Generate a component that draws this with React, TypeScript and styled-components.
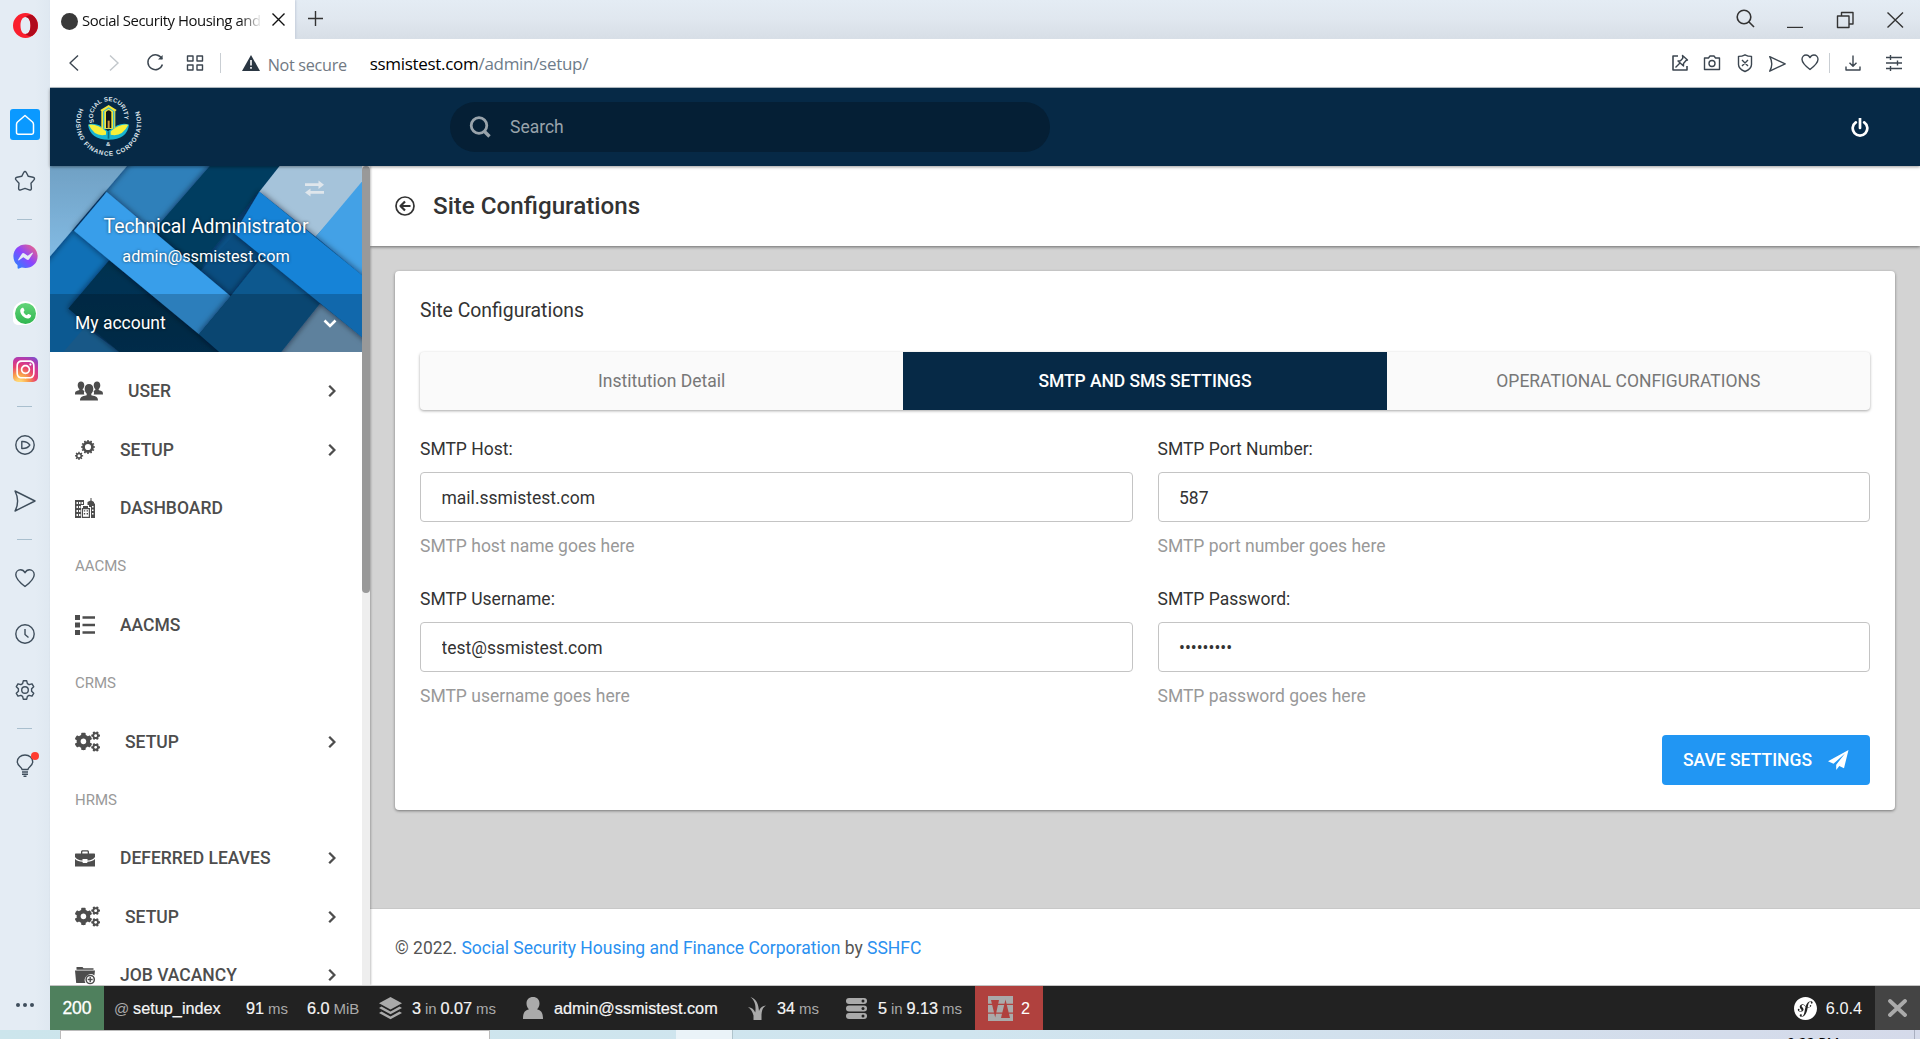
import React from 'react';
import styled, { createGlobalStyle } from 'styled-components';
import { FaCogs, FaFacebookMessenger, FaInstagram } from 'react-icons/fa';
import { SiSymfony } from 'react-icons/si';

const NAVY = '#062946';

const GlobalStyle = createGlobalStyle`
  * { box-sizing: border-box; }
  body { margin: 0; overflow: hidden; font-family: Roboto, "Liberation Sans", sans-serif; font-size: 17.5px; color: #333; }
`;

const Desktop = styled.div`
  width: 1920px;
  height: 1039px;
  display: flex;
  flex-direction: column;
  overflow: hidden;
`;
const BrowserWindow = styled.div`
  height: 1030px;
  display: flex;
  flex-shrink: 0;
`;
const Column = styled.div`
  flex: 1;
  min-width: 0;
  display: flex;
  flex-direction: column;
`;

/* ---------- opera side rail ---------- */
const Rail = styled.nav`
  width: 50px;
  padding: 10.5px 1px 10px 0;
  display: flex;
  flex-direction: column;
  align-items: center;
  background: linear-gradient(90deg, #e4ecf4 70%, #dfe8f1);
`;
const Slot = styled.div<{ $gap?: number }>`
  position: relative;
  width: 30px;
  height: 30px;
  flex-shrink: 0;
  margin-top: ${(p) => p.$gap ?? 0}px;
  display: flex;
  align-items: center;
  justify-content: center;
  color: #3f4e5c;
`;
const AppSlot = styled(Slot)`
  margin-left: 1px;
`;
const HomeTile = styled(Slot)`
  margin-left: 1px;
  height: 31px;
  background: #0a99ff;
  border-radius: 3px;
  color: #fff;
`;
const Dash = styled.div`
  width: 15px;
  height: 1px;
  background: #a9bfce;
`;
const Messenger = styled(FaFacebookMessenger)`
  width: 25px;
  height: 25px;
`;
const WhatsTile = styled.div`
  width: 24px;
  height: 24px;
  border-radius: 50% 50% 50% 20%;
  background: #fff;
  display: flex;
  align-items: center;
  justify-content: center;
`;
const WhatsDisc = styled.div`
  width: 21px;
  height: 21px;
  border-radius: 50%;
  background: linear-gradient(#63d579, #2fb650);
  color: #fff;
  display: flex;
  align-items: center;
  justify-content: center;
`;
const InstaTile = styled.div`
  width: 25px;
  height: 25px;
  border-radius: 5px;
  background: radial-gradient(circle at 25% 105%, #ffd776 8%, #f9a04b 28%, #e8426f 52%, #c736a0 72%, #6a55d8 100%);
  color: #fff;
  display: flex;
  align-items: center;
  justify-content: center;
`;
const Alert = styled.i`
  position: absolute;
  right: 1px;
  top: 1px;
  width: 8px;
  height: 8px;
  border-radius: 50%;
  background: #ff3b30;
`;
const DotsSlot = styled(Slot)`
  margin-top: auto;
`;

/* ---------- browser chrome ---------- */
const uiFont = '"Open Sans", "Noto Sans", sans-serif';
const TabStrip = styled.div`
  height: 39px;
  display: flex;
  align-items: center;
  background: linear-gradient(#e4ecf4, #e0e7ef 50%, #d7dee6);
`;
const Tab = styled.div`
  width: 245px;
  height: 39px;
  padding: 0 10px 0 11px;
  display: flex;
  align-items: center;
  background: #fff;
  font: 14.9px ${uiFont};
  letter-spacing: -0.45px;
  color: #111;
  box-shadow: 1px 0 2px #c5cedb;
`;
const Favicon = styled.div`
  width: 17px;
  height: 17px;
  margin: 3px 4px 0 0;
  border-radius: 50%;
  background: #393939;
  flex-shrink: 0;
`;
const TabTitle = styled.div`
  width: 180px;
  overflow: hidden;
  white-space: nowrap;
  margin-right: 10px;
  flex-shrink: 0;
  mask-image: linear-gradient(90deg, #000 88%, transparent);
`;
const NewTab = styled.div`
  margin-left: 13px;
  display: flex;
  margin-bottom: 2px;
`;
const WindowButtons = styled.div`
  margin-left: auto;
  margin-right: 14px;
  display: flex;
  align-items: center;
  gap: 28px;
  height: 37px;
`;
const FindTabs = styled.div`
  margin: -2px 1px 0 -1px;
`;
const Toolbar = styled.div`
  height: 49px;
  display: flex;
  align-items: center;
  background: #fff;
  border-bottom: 1px solid #b8c2ca;
  padding-left: 14px;
  padding-right: 16px;
  color: #3c4650;
`;
const NavGroup = styled.div`
  display: flex;
  gap: 20.4px;
  align-items: center;
`;
const VLine = styled.div<{ $l: number; $r: number }>`
  width: 1px;
  height: 20px;
  background: #c9ced3;
  margin: 0 ${(p) => p.$r}px 0 ${(p) => p.$l}px;
`;
const NotSecure = styled.span`
  font: 16.2px ${uiFont};
  letter-spacing: -0.3px;
  color: #717983;
  width: 110px;
  padding: 3px 0 0 8px;
  white-space: nowrap;
`;
const Url = styled.span`
  font: 17px ${uiFont};
  letter-spacing: -0.3px;
  color: #000;
  white-space: nowrap;
  span { color: #6d7c8a; }
`;
const ToolIcons = styled.div`
  margin-left: auto;
  display: flex;
  align-items: center;
  gap: 12.5px;
`;

/* ---------- site header ---------- */
const SiteHeader = styled.header`
  height: 78px;
  flex-shrink: 0;
  display: flex;
  align-items: center;
  background: ${NAVY};
  position: relative;
  z-index: 2;
  box-shadow: 0 1px 3px rgba(0, 0, 0, 0.4);
`;
const LogoBox = styled.div`
  width: 400px;
  padding-left: 10px;
  height: 78px;
`;
const SearchPill = styled.div`
  width: 600px;
  height: 50px;
  border-radius: 25px;
  background: #051f35;
  color: #99a3ab;
  display: flex;
  align-items: center;
  padding-left: 19px;
  gap: 19px;
`;
const PowerSlot = styled.div`
  margin-left: auto;
  margin-right: 51px;
  color: #fff;
`;

/* ---------- sidebar ---------- */
const Body = styled.div`
  flex: 1;
  min-height: 0;
  display: flex;
`;
const Sidebar = styled.aside`
  width: 320px;
  display: flex;
  background: #fff;
  overflow: hidden;
  box-shadow: 1px 0 2px rgba(0, 0, 0, 0.25);
  position: relative;
  z-index: 1;
`;
const SideContent = styled.div`
  width: 312px;
`;
const Track = styled.div`
  width: 8px;
  background: #eee;
`;
const Thumb = styled.div`
  height: 427px;
  border-radius: 4px;
  background: #999;
`;
const Profile = styled.div`
  position: relative;
  height: 186px;
  color: #fff;
  text-shadow: 0 0 3px rgba(0, 0, 0, 0.6);
`;
const Backdrop = styled.svg`
  position: absolute;
  inset: 0;
`;
const ProfileText = styled.div`
  position: relative;
  height: 128px;
  text-align: center;
  padding-top: 47px;
`;
const SwapCorner = styled.div`
  position: absolute;
  right: 38px;
  top: 14px;
`;
const Name = styled.div`
  font-size: 19.4px;
  line-height: 28px;
`;
const Email = styled.div`
  font-size: 16.3px;
  line-height: 24px;
  margin-top: 4px;
`;
const Account = styled.div`
  position: relative;
  height: 58px;
  background: rgba(0, 0, 0, 0.2);
  display: flex;
  align-items: center;
  justify-content: space-between;
  padding: 0 25px;
`;
const Menu = styled.div`
  padding-top: 10px;
  color: #4d4d4d;
`;
const Group = styled.div`
  height: 58.4px;
  line-height: 58px;
  padding-left: 25px;
  font-size: 15px;
  color: #999;
`;
const Item = styled.div`
  height: 58.4px;
  display: flex;
  align-items: center;
  padding: 0 26px 0 25px;
  font-weight: 500;
`;
const ItemIcon = styled.span`
  display: flex;
  margin-right: 25px;
`;
const Chevron = styled.svg`
  margin-left: auto;
`;

/* ---------- main ---------- */
const Main = styled.main`
  flex: 1;
  min-width: 0;
  display: flex;
  flex-direction: column;
  background: #d3d3d3;
`;
const PageHeader = styled.div`
  height: 80px;
  background: #fff;
  display: flex;
  align-items: center;
  gap: 18px;
  padding: 0 0 0 25px;
  box-shadow: 0 1px 3px rgba(0, 0, 0, 0.5);
  flex-shrink: 0;
`;
const PageTitle = styled.h1`
  margin: 0;
  font-size: 24.2px;
  font-weight: 500;
`;
const Card = styled.section`
  margin: 25px 25px 0;
  height: 539px;
  padding: 0 25px;
  background: #fff;
  border-radius: 4px;
  box-shadow: 0 1px 3px rgba(0, 0, 0, 0.45);
  flex-shrink: 0;
`;
const CardTitle = styled.h2`
  margin: 0;
  height: 81px;
  line-height: 80px;
  font-size: 19.4px;
  font-weight: 400;
`;
const Tabs = styled.div`
  height: 58px;
  display: grid;
  grid-template-columns: repeat(3, 1fr);
  border-radius: 4px;
  background: #fafafa;
  box-shadow: 0 1px 3px rgba(0, 0, 0, 0.35);
`;
const TabItem = styled.div<{ $active?: boolean }>`
  display: flex;
  align-items: center;
  justify-content: center;
  background: ${(p) => (p.$active ? NAVY : 'transparent')};
  color: ${(p) => (p.$active ? '#fff' : '#777')};
  font-weight: ${(p) => (p.$active ? 500 : 400)};
  letter-spacing: ${(p) => (p.$active ? '-0.07px' : '0')};
`;
const Form = styled.div`
  display: grid;
  grid-template-columns: 1fr 1fr;
  column-gap: 25px;
  padding-top: 25px;
`;
const Field = styled.div`
  height: 150px;
`;
const Label = styled.label`
  display: block;
  height: 37px;
  line-height: 29px;
`;
const Input = styled.input`
  display: block;
  width: 100%;
  height: 50px;
  border: 1px solid #c4c4c4;
  border-radius: 4px;
  padding: 2px 20px 0 20.5px;
  font: inherit;
  color: #333;
  outline: none;
`;
const Help = styled.div`
  line-height: 27px;
  margin-top: 11px;
  color: #999;
`;
const SaveButton = styled.button`
  display: flex;
  align-items: center;
  gap: 16px;
  width: 208px;
  height: 50px;
  margin-left: auto;
  padding: 0 0 0 21px;
  border: 0;
  border-radius: 4px;
  background: #2196f3;
  color: #fff;
  font: 500 17.5px Roboto, sans-serif;
  white-space: nowrap;
`;
const Footer = styled.footer`
  margin-top: auto;
  height: 77px;
  border-top: 1px solid #c8c8c8;
  background: #fff;
  padding: 0 25px;
  line-height: 78px;
  color: #555;
  a { color: #2a90f0; }
`;

/* ---------- debug toolbar ---------- */
const DebugBar = styled.div`
  height: 45px;
  flex-shrink: 0;
  display: flex;
  background: #222;
  border-top: 1px solid #c4c4c4;
  font: 16.25px "Liberation Sans", Arial, sans-serif;
  color: #f5f5f5;
  white-space: nowrap;
  position: relative;
  z-index: 3;
`;
const Block = styled.div<{ $w: number; $pad?: number; $bg?: string }>`
  width: ${(p) => p.$w}px;
  padding-left: ${(p) => p.$pad ?? 0}px;
  background: ${(p) => p.$bg ?? 'transparent'};
  display: flex;
  align-items: center;
  flex-shrink: 0;
  color: ${(p) => (p.$bg ? '#fff' : 'inherit')};
`;
const Status = styled(Block)`
  font-size: 17.5px;
  justify-content: center;
  -webkit-text-stroke: 0.3px #fff;
`;
const Value = styled.span`
  -webkit-text-stroke: 0.2px #f5f5f5;
`;
const Unit = styled.span`
  font-size: 15px;
  word-spacing: -0.3px;
  color: #aaa;
  white-space: pre;
`;
const BlockIcon = styled.svg<{ $gap: number }>`
  margin-right: ${(p) => p.$gap}px;
  flex-shrink: 0;
`;
const Version = styled.div`
  margin-left: auto;
  display: flex;
  align-items: center;
  gap: 9px;
  margin-right: 13px;
`;
const CloseBar = styled.div`
  width: 45px;
  background: #444;
  display: flex;
  align-items: center;
  justify-content: center;
`;

/* ---------- strip of the desktop below the window ---------- */
const Taskbar = styled.div`
  height: 9px;
  display: flex;
  overflow: hidden;
  background: linear-gradient(90deg, #cce5ec, #d0e5ef 50%, #d5daea);
`;
const TaskSearch = styled.div`
  margin-left: 60px;
  width: 430px;
  border: 1px solid #bbb;
  border-bottom: 0;
  background: #fff;
`;
const TaskActive = styled.div`
  margin-left: 186px;
  width: 57px;
  background: #eaf3f8;
  border-right: 1px solid #b0c4cc;
`;
const Clock = styled.div`
  margin-left: auto;
  width: 127px;
  padding-top: 4px;
  font: 14px/17px ${uiFont};
  color: #000;
`;
const TaskEdge = styled.div`
  width: 6px;
  border-left: 1px solid #a9afc0;
`;

/* ---------- drawings ---------- */
const LineSvg = styled.svg`
  display: block;
  fill: none;
  stroke: currentColor;
  stroke-linejoin: round;
`;
type IconProps = { w: number; h?: number; sw?: number; vb?: string; children: React.ReactNode };
const Line = ({ w, h = w, sw = 1.4, vb, children }: IconProps) => (
  <LineSvg width={w} height={h} viewBox={vb ?? `0 0 ${w} ${h}`} strokeWidth={sw}>{children}</LineSvg>
);

const gearPath = (cx: number, cy: number, teeth: number, ro: number, ri: number, hole: number) => {
  const pts: string[] = [];
  const step = (Math.PI * 2) / teeth;
  for (let i = 0; i < teeth; i++) {
    const a = i * step;
    ([[ri, -0.28], [ro, -0.2], [ro, 0.2], [ri, 0.28]] as const).forEach(([r, o]) => {
      pts.push(`${(cx + r * Math.sin(a + o * step)).toFixed(2)},${(cy - r * Math.cos(a + o * step)).toFixed(2)}`);
    });
  }
  return `M${pts.join('L')}Z M${cx - hole},${cy}a${hole},${hole} 0 1 0 ${hole * 2},0a${hole},${hole} 0 1 0 ${-hole * 2},0Z`;
};

const StarIcon = () => (
  <Line w={22} h={22}><path d="M11 1.500c.7 0 1 .5 1.300 1l2 3.800 4.700 1c1.500.3 2 1.500 1 2.600l-3 3.300.4 5.100c.1 1.500-.9 2-2.200 1.500L11 18.400l-4.200 1.400c-1.300.5-2.300 0-2.200-1.500l.4-5.100-3-3.300C1 8.800 1.500 7.600 3 7.300l4.700-1 2-3.800c.3-.5.6-1 1.300-1z" /></Line>
);
const SendIcon = () => (
  <Line w={22}><path d="M1 1l20 10L1 21c3.500-6.700 3.500-13.300 0-20z" /></Line>
);
const HEART = 'M10 18.500C6 15.500.8 11.500.8 6.800.8 3.800 3 1.800 5.500 1.800c2 0 3.600 1.200 4.500 3 .9-1.800 2.500-3 4.500-3 2.500 0 4.700 2 4.700 5 0 4.700-5.200 8.700-9.200 11.700z';
const ChevronIcon = () => (
  <Chevron width="8" height="14" viewBox="0 0 8 14" fill="none" stroke="currentColor" strokeWidth="2.300"><path d="M1.200 1.800L6.400 7l-5.200 5.200" /></Chevron>
);
const UsersIcon = () => (
  <svg width="28" height="20" viewBox="0 0 28 20" fill="currentColor">
    <path d="M6 .5c2 0 3.300 1.500 3.300 3.700 0 1.700-.8 3.100-1.600 3.800v1.100l1.800.9c-.8 1.500-.6 2.700-.1 3.500H0c0-2.700.6-3.300 4.300-4.400V8C3.500 7.300 2.700 5.900 2.700 4.200 2.700 2 4 .5 6 .5z" />
    <path d="M22 .5c-2 0-3.300 1.500-3.300 3.700 0 1.700.8 3.100 1.600 3.800v1.100l-1.800.9c.8 1.500.6 2.700.1 3.500H28c0-2.700-.6-3.300-4.300-4.400V8c.8-.7 1.600-2.100 1.600-3.800C25.300 2 24 .5 22 .5z" />
    <path d="M14 3c2.600 0 4.300 2 4.300 4.800 0 2.200-.9 4-2 4.900v1.500c5.200 1.100 6.700 2 6.700 5.300H5c0-3.300 1.500-4.200 6.700-5.300v-1.500c-1.100-.9-2-2.700-2-4.900C9.700 5 11.400 3 14 3z" />
  </svg>
);
const GearsIcon = () => (
  <svg width="20" height="20" viewBox="0 0 20 20" fill="currentColor" fillRule="evenodd">
    <path d={gearPath(13, 7, 12, 7, 5.8, 3.1)} />
    <path d={gearPath(4, 15.8, 8, 4.2, 3.1, 1.5)} />
  </svg>
);
const CityIcon = () => (
  <svg width="20" height="20" viewBox="0 0 20 20" fill="currentColor" fillRule="evenodd">
    <path d="M0 2h9v5H6v13H0zM1.500 4v2H3V4zm2.500 0v2h1.500V4zm2.500 0v2H8V4zM1.500 8v2H3V8zM4 8v2h1.500V8zM1.500 12v2H3v-2zM4 12v2h1.500v-2zM1.500 16v2H3v-2zM4 16v2h1.500v-2z" />
    <path d="M15.500 0h1v2.500L19 4v1.500h1V20h-4V9h-2V7h-1.500V4L15.500 2.500zM17 8v1.500h1.500V8zm0 3.500V13h1.500v-1.500zm0 3.500v1.500h1.500V15z" />
    <path d="M8 8h5v2h2v10H6.800V10H8zM8 11.200v7.600h5.800v-7.600z" />
    <path d="M8.800 12.200h1.400v1.400H8.800zM11.600 12.200H13v1.400h-1.400zM8.800 15h1.400v1.400H8.800zM11.600 15H13v1.400h-1.400z" />
  </svg>
);
const ListIcon = () => (
  <svg width="20" height="20" viewBox="0 0 20 20" fill="currentColor">
    <path d="M0 0h5v5H0zM0 7.500h5v5H0zM0 15h5v5H0zM7.500 1.200H20v2.500H7.500zM7.500 8.700H20v2.500H7.500zM7.500 16.200H20v2.500H7.500z" />
  </svg>
);
const CaseIcon = () => (
  <svg width="20" height="20" viewBox="0 0 20 20" fill="currentColor">
    <path d="M6 5.500V4c0-1.200.6-1.700 1.700-1.700h4.600C13.400 2.300 14 2.800 14 4v1.500h5c.7 0 1 .3 1 1V9c-1.500 2.300-4 3.300-7.500 3.500V11h-5v1.500C4 12.300 1.500 11.300 0 9V6.500c0-.7.3-1 1-1zm1.300 0h5.400V4c0-.3-.2-.5-.5-.5H7.800c-.3 0-.5.2-.5.5z" fillRule="evenodd" />
    <path d="M0 11c2 1.800 4.300 2.500 7.500 2.700 0 1 .5 1.300 1.200 1.300h2.600c.7 0 1.200-.3 1.200-1.300 3.200-.2 5.500-.9 7.500-2.700v7.500H0z" />
  </svg>
);
const FolderIcon = () => (
  <svg width="20" height="20" viewBox="0 0 20 20" fill="currentColor">
    <path d="M1.500 2h6l1 1.300h10v1.400H1.500zM0 5.500h20l-.6 5a6 6 0 0 0-9 7.500H1.200z" />
    <circle cx="15.200" cy="14.500" r="4.100" fill="#fff" stroke="currentColor" strokeWidth="1.500" />
    <path d="M14.500 12h1.400v1.800h1.800v1.400h-1.800V17h-1.400v-1.800h-1.800v-1.400h1.800z" />
  </svg>
);
const PlaneIcon = () => (
  <svg width="21" height="20" viewBox="0 0 21 20" fill="currentColor">
    <path d="M20.500 0L0 11.200l5.500 2.600L17 3.500 8.200 14.700V20l3.100-3.900 4.700 2.100z" />
  </svg>
);

const ProfileArt = () => (
  <Backdrop width="312" height="186" viewBox="150 18 936 557" preserveAspectRatio="none">
    <defs>
      <filter id="shade" x="-20%" y="-20%" width="140%" height="140%"><feDropShadow dx="0" dy="0" stdDeviation="10" floodColor="#00101f" floodOpacity="0.65" /></filter>
      <linearGradient id="sky" x1="0" y1="0" x2="0" y2="1"><stop offset="0" stopColor="#6f9fc2" /><stop offset="1" stopColor="#84bde6" /></linearGradient>
      <linearGradient id="deep" x1="0" y1="0" x2="0" y2="1"><stop offset="0" stopColor="#06304f" /><stop offset="1" stopColor="#06375c" /></linearGradient>
    </defs>
    <rect x="150" y="18" width="936" height="557" fill="#0b5288" />
    <polygon points="360,0 650,0 450,230 310,110" fill="#2f80ba" />
    <g filter="url(#shade)"><polygon points="645,0 853,0 620,290 600,340 440,235" fill="#063c61" /></g>
    <polygon points="705,220 785,290 690,408 600,335" fill="#0a4d80" />
    <polygon points="130,220 225,212 328,300 170,490 130,530" fill="#1070b6" />
    <polygon points="130,530 205,445 290,510 190,590 130,590" fill="#1070b6" />
    <polygon points="190,575 255,500 360,575" fill="#1e6fa9" />
    <g filter="url(#shade)"><polygon points="328,300 205,445 375,590 680,590" fill="url(#deep)" /></g>
    <g filter="url(#shade)"><polygon points="130,0 396,0 130,312" fill="url(#sky)" /></g>
    <g filter="url(#shade)"><polygon points="320,96 692,408 597,522 222,212" fill="#379eea" /></g>
    <polygon points="820,520 960,430 1100,541 1100,600 800,600" fill="#76a2c5" />
    <g filter="url(#shade)"><polygon points="790,285 972,415 830,592 675,590 597,522 692,408" fill="#0b588e" /></g>
    <polygon points="853,0 1110,0 1110,50 947,230 778,95" fill="#a5c3da" />
    <polygon points="1110,36 947,230 1110,365" fill="#43a1e6" />
    <g filter="url(#shade)"><polygon points="778,95 1110,365 1110,550 703,220" fill="#1683d7" /></g>
  </Backdrop>
);

const SealLogo = () => (
  <svg width="100" height="76" viewBox="0 0 300 228">
    <defs>
      <path id="inner" d="M102 103A47 47 0 1 1 190 103" />
      <path id="outer" d="M59 60A98 98 0 1 0 233 60" />
    </defs>
    <g fill="#dfe6ec" fontFamily="Liberation Sans, sans-serif" fontWeight="700">
      <text fontSize="18" textLength="172" lengthAdjust="spacing"><textPath href="#inner">SOCIAL SECURITY</textPath></text>
      <text fontSize="19" textLength="392" lengthAdjust="spacing"><textPath href="#outer">HOUSING FINANCE CORPORATION</textPath></text>
      <text x="138" y="173" fontSize="18">&amp;</text>
    </g>
    <path d="M84 110Q100 104 118 112L144 130 172 112Q190 104 207 110Q202 154 146 155Q90 154 84 110z" fill="#19b4d2" />
    <path d="M86 110Q112 106 138 130L138 140Q104 148 86 110z M205 110Q178 106 152 130L152 140Q186 148 205 110z" fill="#f7f03a" />
    <path d="M121 66L146 51 170 66 166 70V122H124V70z" fill="#f4e63a" />
    <path d="M129 70L146 58 163 70V122H129z" fill="#38b7cc" />
    <path d="M133 70L146 62 159 70V122H133z" fill="#f4e63a" />
    <path d="M138 72Q146 62 154 72V120H138z" fill="#101418" />
    <path d="M143 98h6v22h-6z" fill="#d6a03a" />
    <path d="M143 130h5v22h-5z" fill="#0c7087" />
  </svg>
);

const menu = [
  { label: 'USER', icon: <UsersIcon />, more: true },
  { label: 'SETUP', icon: <GearsIcon />, more: true },
  { label: 'DASHBOARD', icon: <CityIcon /> },
  { group: 'AACMS' },
  { label: 'AACMS', icon: <ListIcon /> },
  { group: 'CRMS' },
  { label: 'SETUP', icon: <FaCogs size={25} />, more: true },
  { group: 'HRMS' },
  { label: 'DEFERRED LEAVES', icon: <CaseIcon />, more: true },
  { label: 'SETUP', icon: <FaCogs size={25} />, more: true },
  { label: 'JOB VACANCY', icon: <FolderIcon />, more: true },
];

const fields = [
  { label: 'SMTP Host:', value: 'mail.ssmistest.com', help: 'SMTP host name goes here' },
  { label: 'SMTP Port Number:', value: '587', help: 'SMTP port number goes here' },
  { label: 'SMTP Username:', value: 'test@ssmistest.com', help: 'SMTP username goes here' },
  { label: 'SMTP Password:', value: '123456789', help: 'SMTP password goes here', type: 'password' },
];

const SideRail = () => (
  <Rail>
    <AppSlot>
      <svg width="25" height="25" viewBox="0 0 25 25">
        <path fillRule="evenodd" fill="#fa1e2d" d="M12.500 0a12.500 12.500 0 1 0 0 25 12.500 12.500 0 0 0 0-25zm0 4c3 0 5 3.500 5 8.500s-2 8.500-5 8.500-5-3.500-5-8.500 2-8.500 5-8.500z" />
        <path fill="#b00a1c" d="M12.500 4c2-1.800 4-2.400 6.500-1.900 7.500 4.500 8 16 0 20.800-2.500.5-4.500-.1-6.500-1.900 3 0 5-3.500 5-8.500s-2-8.500-5-8.500z" />
      </svg>
    </AppSlot>
    <HomeTile $gap={68.5}><Line w={20} h={22} sw={1.5}><path d="M10 1.500l7.500 6.500c.8.800 1 1.500 1 2.500v8c0 1-.6 1.700-1.700 1.700H3.200c-1.100 0-1.700-.7-1.700-1.700v-8c0-1 .2-1.700 1-2.500z" /></Line></HomeTile>
    <Slot $gap={26}><StarIcon /></Slot>
    <Slot $gap={8}><Dash /></Slot>
    <AppSlot $gap={7}>
      <Messenger fill="url(#msg)" />
      <svg width="0" height="0"><defs><linearGradient id="msg" x1="0" y1="1" x2="1" y2="0"><stop offset="0" stopColor="#1a8cff" /><stop offset=".5" stopColor="#8a45ff" /><stop offset="1" stopColor="#ff6a70" /></linearGradient></defs></svg>
    </AppSlot>
    <AppSlot $gap={27}><WhatsTile><WhatsDisc><svg width="13" height="13" viewBox="0 0 13 13" fill="currentColor"><path d="M3.300.8c.4-.3.900-.2 1.100.2l1 2.100c.2.400 0 .7-.2 1l-.7.8c.700 1.500 1.800 2.600 3.400 3.300l.9-1c.2-.3.500-.3.800-.2l2.200 1.100c.4.200.4.500.3.900-.5 1.700-1.700 2.700-3.300 2.500C4.900 10.900 1.400 7.400 1.200 3.900 1.200 2.500 2.200 1.300 3.300.8z" /></svg></WhatsDisc></WhatsTile></AppSlot>
    <AppSlot $gap={26}><InstaTile><FaInstagram size={21} /></InstaTile></AppSlot>
    <Slot $gap={7.5}><Dash /></Slot>
    <Slot $gap={8}><Line w={20}><circle cx="10" cy="10" r="9.200" /><path d="M6.800 6.500c4-.2 6.500 1.200 8 3.500-1.500 2.300-4 3.700-8 3.500z" /></Line></Slot>
    <Slot $gap={26.5}><SendIcon /></Slot>
    <Slot $gap={8}><Dash /></Slot>
    <Slot $gap={8.5}><Line w={20}><path d={HEART} /></Line></Slot>
    <Slot $gap={26}><Line w={20}><circle cx="10" cy="10" r="9.200" /><path d="M10 5v5.500l3.500 3" /></Line></Slot>
    <Slot $gap={26}><Line w={20}><path d="M8.300.8h3.400l.7 2.900 1.700 1 2.900-.9 1.700 2.900-2.100 2.100v2.400l2.100 2.100-1.700 2.900-2.900-.9-1.700 1-.7 2.900H8.300l-.7-2.900-1.700-1-2.900.9-1.700-2.900 2.100-2.100V8.800L1.300 6.700 3 3.800l2.900.9 1.700-1z" /><circle cx="10" cy="10" r="3.300" /></Line></Slot>
    <Slot $gap={8.5}><Dash /></Slot>
    <Slot $gap={7.5}>
      <Line w={18} h={23}><path d="M6 15.500C6 13 1.300 12 1.300 7.700 1.300 4 4.500 1 9 1s7.700 3 7.700 6.700C16.700 12 12 13 12 15.500zM6 18h6M6 20.200h6M7.500 22.300h3" /></Line>
      <Alert />
    </Slot>
    <DotsSlot><svg width="18" height="4" fill="currentColor"><circle cx="2" cy="2" r="2" /><circle cx="9" cy="2" r="2" /><circle cx="16" cy="2" r="2" /></svg></DotsSlot>
  </Rail>
);

const Chrome = () => (
  <>
    <TabStrip>
      <Tab>
        <Favicon />
        <TabTitle>Social Security Housing and</TabTitle>
        <Line w={13}><path d="M.5.5l12 12M12.500.5l-12 12" /></Line>
      </Tab>
      <NewTab><Line w={15}><path d="M7.500 0v15M0 7.500h15" /></Line></NewTab>
      <WindowButtons>
        <FindTabs><Line w={20} sw={1.6}><circle cx="9" cy="8" r="6.800" /><path d="M13.500 12.500l5.500 5.500" /></Line></FindTabs>
        <Line w={22} h={16}><path d="M3 16h16" strokeWidth="2.400" /></Line>
        <Line w={22} h={18}><path d="M3.500 5h11.500v11.500H3.500zM7.500 5V1.500H19v11.500h-4" /></Line>
        <Line w={22} h={18}><path d="M3.500 1.500l15.500 15M19 1.500l-15.500 15" /></Line>
      </WindowButtons>
    </TabStrip>
    <Toolbar>
      <NavGroup>
        <Line w={20}><path d="M14 2.500L6 10l8 7.500" /></Line>
        <svg width="20" height="20" fill="none" stroke="#c2c7cb" strokeWidth="1.400"><path d="M6 2.500l8 7.500-8 7.500" /></svg>
        <Line w={20} sw={1.5}><path d="M17 6A7.400 7.400 0 1 0 17.400 11.500" /><path d="M17.600 2v4.500H13z" fill="currentColor" stroke="none" /></Line>
        <Line w={20}><path d="M2.500 3h5.500v5H2.500zM12 3h5.500v5H12zM2.500 12h5.500v5H2.500zM12 12h5.500v5H12z" /></Line>
      </NavGroup>
      <VLine $l={14.5} $r={21} />
      <svg width="18" height="16" viewBox="0 0 18 16"><path d="M9 0l9 16H0z" fill="#2a3642" /><path d="M8.200 5h1.600v5.500H8.200zM8.200 12h1.600v1.700H8.200z" fill="#fff" /></svg>
      <NotSecure>Not secure</NotSecure>
      <Url>ssmistest.com<span>/admin/setup/</span></Url>
      <ToolIcons>
        <Line w={20}><path d="M8 3H3v14h14v-4" strokeWidth="1.600" /><path d="M12.500 2.500l5 4.500-1.500.5-2.500 3v2.500l-5.500-5 2.500-.3 2.300-2.500zM10 10l-4.500 4.500" /></Line>
        <Line w={20}><path d="M2.500 5h4l1.500-2h4l1.500 2h4v11.500h-15z" /><circle cx="10" cy="10.500" r="3" /></Line>
        <Line w={20}><path d="M10 1.800c2.500 1.400 4.500 1.600 6.500 1.600v8c0 3.500-3.500 5.800-6.500 7.100-3-1.300-6.500-3.600-6.500-7.100v-8c2 0 4-.2 6.500-1.600zM7 7l6 6M13 7l-6 6" /></Line>
        <Line w={20} vb="-1.500 -2.500 22 22" sw={1.5}><path d="M1.500 1.500l17 8-17 8c3-5.300 3-10.700 0-16z" /></Line>
        <Line w={20} vb="-1.500 -.5 23 23" sw={1.6}><path d={HEART} /></Line>
        <VLine $l={-3} $r={0} />
        <Line w={20}><path d="M10 2.500v10.500M6.500 9.700l3.500 3.500 3.500-3.500M3 13.500v3.500h14v-3.500" /></Line>
        <Line w={29} h={20} vb="7 0 29 20"><path d="M18 4.500h16M18 10h16M18 15.500h16M22.500 2v5M29.500 7.500v5M22.500 13v5" /></Line>
      </ToolIcons>
    </Toolbar>
  </>
);

const Debug = () => (
  <DebugBar>
    <Status $w={54} $bg="#4f805d">200</Status>
    <Block $w={142} $pad={10}><Unit>@ </Unit><Value>setup_index</Value></Block>
    <Block $w={61}><Value>91</Value><Unit> ms</Unit></Block>
    <Block $w={72}><Value>6.0</Value><Unit> MiB</Unit></Block>
    <Block $w={144}>
      <BlockIcon $gap={10} width="23" height="24" viewBox="0 0 23 24" fill="#aaa"><path d="M11.500 1L23 7.200 11.500 13.500 0 7.200z" /><path d="M2.500 10.500l9 5 9-5L23 12l-11.500 6.200L0 12z" /><path d="M2.500 15.500l9 5 9-5L23 17l-11.500 6.200L0 17z" /></BlockIcon>
      <Value>3</Value><Unit> in </Unit><Value>0.07</Value><Unit> ms</Unit>
    </Block>
    <Block $w={225}>
      <BlockIcon $gap={11} width="20" height="22" viewBox="0 0 20 22" fill="#aaa"><path d="M10 0c4 0 6.500 2.500 6.500 6.500 0 2.500-1 4.500-2.500 5.800 4 1.200 6 3 6 9.700H0c0-6.700 2-8.500 6-9.700C4.500 11 3.500 9 3.500 6.500 3.500 2.500 6 0 10 0z" /></BlockIcon>
      <Value>admin@ssmistest.com</Value>
    </Block>
    <Block $w={98}>
      <BlockIcon $gap={11} width="18" height="23" viewBox="0 0 18 23" fill="#aaa"><path d="M2.500 0C9 2 10.500 8 11 14c.8-3 2.700-5 7-5.500-3.500 2-4 5-4.500 9v5.500H5.500v-4.500C4.500 15 3 12 0 10c4 .5 5.800 2.500 7.300 5.500C8 10 7.500 4 2.500 0z" /></BlockIcon>
      <Value>34</Value><Unit> ms</Unit>
    </Block>
    <Block $w={129}>
      <BlockIcon $gap={11} width="21" height="21" viewBox="0 0 21 21"><rect width="21" height="6" rx="3" fill="#aaa" /><rect y="7.500" width="21" height="6" rx="3" fill="#aaa" /><rect y="15" width="21" height="6" rx="3" fill="#aaa" /><circle cx="17" cy="3" r="1.500" fill="#222" /><circle cx="17" cy="10.500" r="1.500" fill="#222" /><circle cx="17" cy="18" r="1.500" fill="#222" /></BlockIcon>
      <Value>5</Value><Unit> in </Unit><Value>9.13</Value><Unit> ms</Unit>
    </Block>
    <Block $w={68} $pad={13} $bg="#b0413e">
      <BlockIcon $gap={8} width="25" height="25" viewBox="0 0 25 25"><rect width="25" height="25" fill="#aaa" /><path d="M0 7.800h25v1.200H0zM0 16.500h25v1.200H0zM3 4h8l-3.800 17.500zM17.500 3.500L22 22h-9z" fill="#b0413e" /></BlockIcon>
      2
    </Block>
    <Version><SiSymfony size={23} color="#fff" />6.0.4</Version>
    <CloseBar><svg width="19" height="18" viewBox="0 0 19 18" stroke="#aaa" strokeWidth="3.800" strokeLinecap="round"><path d="M2 2l15 14M17 2L2 16" /></svg></CloseBar>
  </DebugBar>
);

export default function App() {
  return (
    <Desktop>
      <GlobalStyle />
      <BrowserWindow>
        <SideRail />
        <Column>
          <Chrome />
          <SiteHeader>
            <LogoBox><SealLogo /></LogoBox>
            <SearchPill><Line w={22} sw={2.8}><circle cx="10" cy="9.500" r="7.800" /><path d="M15 15l5.500 5.500" strokeWidth="3.400" /></Line>Search</SearchPill>
            <PowerSlot><Line w={18} h={19} sw={2.7}><path d="M4.800 4.300A7.300 7.300 0 1 0 13.200 4.300M9 .5v9.500" strokeLinecap="round" /></Line></PowerSlot>
          </SiteHeader>
          <Body>
            <Sidebar>
              <SideContent>
                <Profile>
                  <ProfileArt />
                  <ProfileText>
                    <SwapCorner><svg width="19" height="17" viewBox="0 0 19 17" fill="#dfe6ec"><path d="M0 3.300h13.500V.5L19 4.700l-5.500 4.200V6.100H0zM19 11v2.800H5.500v2.800L0 12.400 5.500 8.500V11z" /></svg></SwapCorner>
                    <Name>Technical Administrator</Name>
                    <Email>admin@ssmistest.com</Email>
                  </ProfileText>
                  <Account>My account<svg width="14" height="9" viewBox="0 0 14 9" fill="none" stroke="#fff" strokeWidth="2.600"><path d="M1.500 1.500L7 7l5.500-5.500" /></svg></Account>
                </Profile>
                <Menu>
                  {menu.map((m, i) =>
                    m.group ? <Group key={i}>{m.group}</Group> : (
                      <Item key={i}><ItemIcon>{m.icon}</ItemIcon>{m.label}{m.more && <ChevronIcon />}</Item>
                    ),
                  )}
                </Menu>
              </SideContent>
              <Track><Thumb /></Track>
            </Sidebar>
            <Main>
              <PageHeader>
                <Line w={20} sw={1.7}><circle cx="10" cy="10" r="9" /><path d="M15.500 10H6M10 5.500L5.500 10l4.500 4.500" strokeWidth="2.200" /></Line>
                <PageTitle>Site Configurations</PageTitle>
              </PageHeader>
              <Card>
                <CardTitle>Site Configurations</CardTitle>
                <Tabs>
                  <TabItem>Institution Detail</TabItem>
                  <TabItem $active>SMTP AND SMS SETTINGS</TabItem>
                  <TabItem>OPERATIONAL CONFIGURATIONS</TabItem>
                </Tabs>
                <Form>
                  {fields.map((f) => (
                    <Field key={f.label}>
                      <Label>{f.label}</Label>
                      <Input type={f.type ?? 'text'} defaultValue={f.value} />
                      <Help>{f.help}</Help>
                    </Field>
                  ))}
                </Form>
                <SaveButton>SAVE SETTINGS<PlaneIcon /></SaveButton>
              </Card>
              <Footer>© 2022. <a>Social Security Housing and Finance Corporation</a> by <a>SSHFC</a></Footer>
            </Main>
          </Body>
          <Debug />
        </Column>
      </BrowserWindow>
      <Taskbar>
        <TaskSearch />
        <TaskActive />
        <Clock>9:22 PM</Clock>
        <TaskEdge />
      </Taskbar>
    </Desktop>
  );
}
